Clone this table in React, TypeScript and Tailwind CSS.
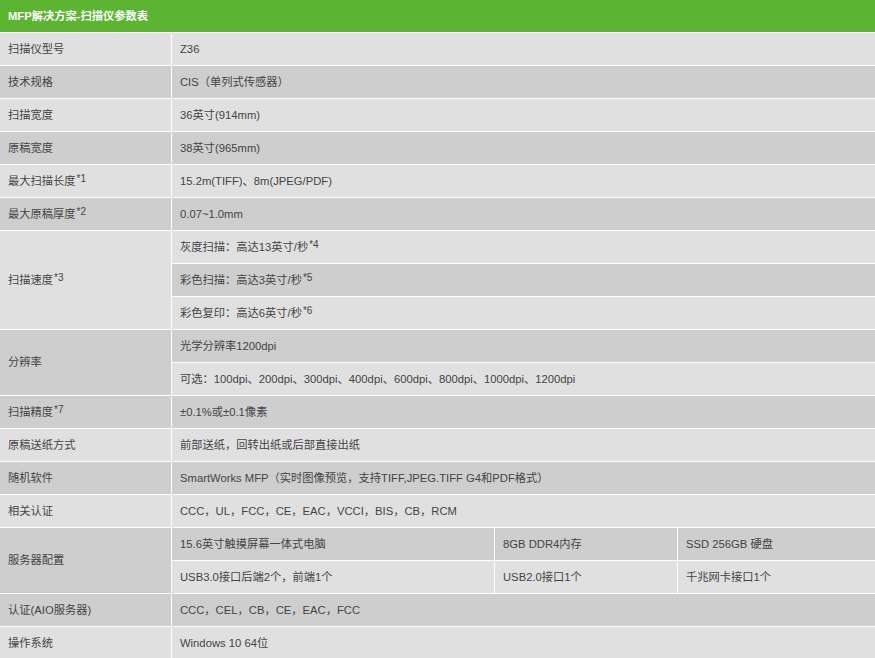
import React from "react"

const light = "bg-[#e0e0e0]"
const dark = "bg-[#cecece]"

function Sup({ n }: { n: string }) {
  return <sup className="text-[10px] relative -top-[2px] ml-px">*{n}</sup>
}

function Cell({ bg, className = "", children }: { bg: string; className?: string; children: React.ReactNode }) {
  return <div className={`${bg} flex items-center px-2 ${className}`}>{children}</div>
}

export default function App() {
  return (
    <div
      className="w-[875px] h-[658px] overflow-hidden bg-white text-[11.25px] text-[#444]"
      style={{ fontFamily: '"Liberation Sans", Arial, "Noto Sans CJK SC", sans-serif' }}
    >
      <div className="grid grid-cols-[171px_322px_182px_1fr] auto-rows-[32px] gap-px bg-white">
        {/* header */}
        <div className="col-span-4 bg-[#5cb531] flex items-center px-2 font-bold text-white">
          MFP解决方案-扫描仪参数表
        </div>

        <Cell bg={light}>扫描仪型号</Cell>
        <Cell bg={light} className="col-span-3">Z36</Cell>

        <Cell bg={dark}>技术规格</Cell>
        <Cell bg={dark} className="col-span-3">CIS（单列式传感器）</Cell>

        <Cell bg={light}>扫描宽度</Cell>
        <Cell bg={light} className="col-span-3">36英寸(914mm)</Cell>

        <Cell bg={dark}>原稿宽度</Cell>
        <Cell bg={dark} className="col-span-3">38英寸(965mm)</Cell>

        <Cell bg={light}>最大扫描长度<Sup n="1" /></Cell>
        <Cell bg={light} className="col-span-3">15.2m(TIFF)、8m(JPEG/PDF)</Cell>

        <Cell bg={dark}>最大原稿厚度<Sup n="2" /></Cell>
        <Cell bg={dark} className="col-span-3">0.07~1.0mm</Cell>

        {/* scan speed */}
        <Cell bg={light} className="row-span-3">扫描速度<Sup n="3" /></Cell>
        <Cell bg={light} className="col-span-3">灰度扫描：高达13英寸/秒<Sup n="4" /></Cell>
        <Cell bg={dark} className="col-span-3">彩色扫描：高达3英寸/秒<Sup n="5" /></Cell>
        <Cell bg={light} className="col-span-3">彩色复印：高达6英寸/秒<Sup n="6" /></Cell>

        {/* resolution */}
        <Cell bg={dark} className="row-span-2">分辨率</Cell>
        <Cell bg={dark} className="col-span-3">光学分辨率1200dpi</Cell>
        <Cell bg={light} className="col-span-3">
          可选：100dpi、200dpi、300dpi、400dpi、600dpi、800dpi、1000dpi、1200dpi
        </Cell>

        <Cell bg={dark}>扫描精度<Sup n="7" /></Cell>
        <Cell bg={dark} className="col-span-3">±0.1%或±0.1像素</Cell>

        <Cell bg={light}>原稿送纸方式</Cell>
        <Cell bg={light} className="col-span-3">前部送纸，回转出纸或后部直接出纸</Cell>

        <Cell bg={dark}>随机软件</Cell>
        <Cell bg={dark} className="col-span-3">
          SmartWorks MFP（实时图像预览，支持TIFF,JPEG.TIFF G4和PDF格式）
        </Cell>

        <Cell bg={light}>相关认证</Cell>
        <Cell bg={light} className="col-span-3">CCC，UL，FCC，CE，EAC，VCCI，BIS，CB，RCM</Cell>

        {/* server */}
        <Cell bg={dark} className="row-span-2">服务器配置</Cell>
        <Cell bg={dark}>15.6英寸触摸屏幕一体式电脑</Cell>
        <Cell bg={dark}>8GB DDR4内存</Cell>
        <Cell bg={dark}>SSD 256GB 硬盘</Cell>
        <Cell bg={light}>USB3.0接口后端2个，前端1个</Cell>
        <Cell bg={light}>USB2.0接口1个</Cell>
        <Cell bg={light}>千兆网卡接口1个</Cell>

        <Cell bg={dark}>认证(AIO服务器)</Cell>
        <Cell bg={dark} className="col-span-3">CCC，CEL，CB，CE，EAC，FCC</Cell>

        <Cell bg={light}>操作系统</Cell>
        <Cell bg={light} className="col-span-3">Windows 10 64位</Cell>
      </div>
    </div>
  )
}
